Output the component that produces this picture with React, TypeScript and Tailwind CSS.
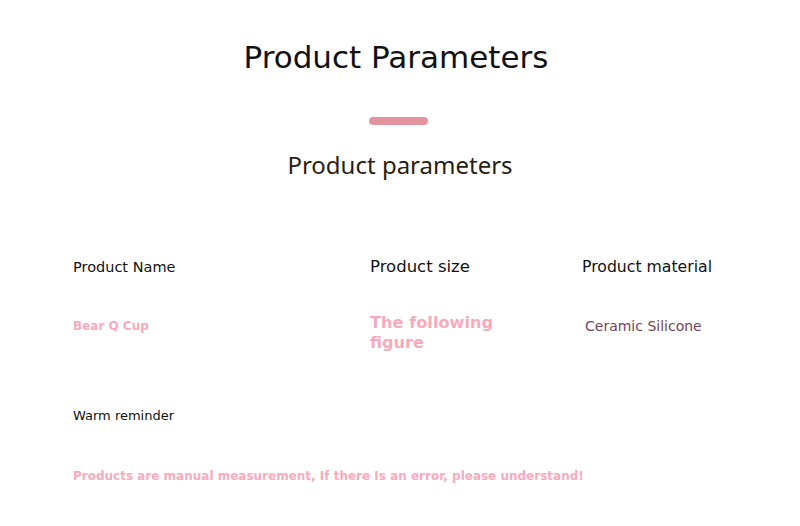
export default function App() {
  return (
    <div className="w-[800px] h-[526px] bg-white overflow-hidden font-['DejaVu_Sans',sans-serif]">
      <div className="flex flex-col items-center">
        <h1 className="mt-[38px] mr-[8px] text-[31px] leading-[38px] text-[#111] font-normal">
          Product Parameters
        </h1>
        <div className="mt-[41px] mr-[3px] w-[59px] h-[8px] rounded-full bg-[#e3959f]" />
        <h2 className="mt-[24px] font-['Noto_Sans',sans-serif] text-[24px] leading-[32px] text-[#2a1d12]">
          Product parameters
        </h2>
      </div>

      <div className="pl-[73px] mt-[76px] grid grid-cols-[297px_212px_1fr] items-start">
        <div className="text-[14.5px] leading-[20px] text-[#111]">Product Name</div>
        <div className="text-[16.5px] leading-[20px] text-[#111]">Product size</div>
        <div className="text-[15.7px] leading-[20px] text-[#111]">Product material</div>

        <div className="mt-[40px] text-[12px] leading-[18px] font-bold text-[#f8aabd]">Bear Q Cup</div>
        <div className="mt-[36px] text-[16.2px] leading-[20px] font-bold text-[#f8aabd]">
          The following
          <br />
          figure
        </div>
        <div className="mt-[40px] pl-[3px] text-[14px] leading-[18px] text-[#76435a]">Ceramic Silicone</div>
      </div>

      <div className="pl-[73px] mt-[53px] text-[13px] leading-[20px] text-[#111]">Warm reminder</div>
      <div className="pl-[73px] mt-[40px] text-[12px] leading-[20px] font-bold text-[#f8aabd]">
        Products are manual measurement, If there Is an error, please understand!
      </div>
    </div>
  );
}
